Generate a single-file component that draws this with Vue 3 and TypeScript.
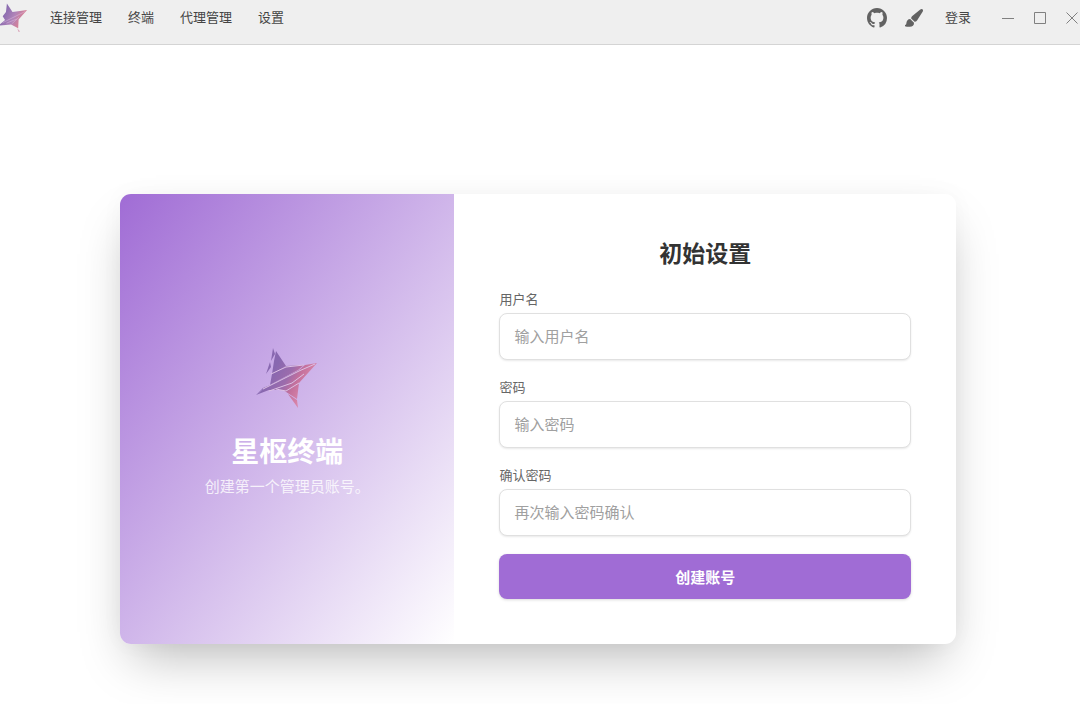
<script setup lang="ts">
import { ref } from 'vue'

interface Field {
  id: string
  label: string
  placeholder: string
  type: string
}

const navItems: string[] = ['连接管理', '终端', '代理管理', '设置']

const fields: Field[] = [
  { id: 'username', label: '用户名', placeholder: '输入用户名', type: 'text' },
  { id: 'password', label: '密码', placeholder: '输入密码', type: 'password' },
  { id: 'confirm', label: '确认密码', placeholder: '再次输入密码确认', type: 'password' },
]

const values = ref<Record<string, string>>({ username: '', password: '', confirm: '' })
</script>

<template>
  <div class="page">
    <header class="topbar">
      <svg class="brand" viewBox="0 0 64 64" aria-hidden="true">
        <defs>
          <linearGradient id="brandFill" gradientUnits="userSpaceOnUse" x1="8" y1="20" x2="58" y2="44">
            <stop offset="0.1" stop-color="#8a6cb0" />
            <stop offset="0.5" stop-color="#b184b8" />
            <stop offset="0.8" stop-color="#d58096" />
          </linearGradient>
        </defs>
        <path fill="url(#brandFill)" d="M19 1 31 19 62 15 44 35 43 54 28 46 1 48 15 36 10 28 17 19Z" />
        <path fill="#d9a3b8" d="M41 54 47 61 44 62Z" />
        <path class="brand-line" d="M10 42 58 18M18 43 40 34M30 44 45 30" />
      </svg>
      <nav class="nav">
        <a v-for="item in navItems" :key="item" href="#">{{ item }}</a>
      </nav>
      <div class="actions">
        <a class="icon-link" href="#" aria-label="GitHub">
          <svg width="20" height="20" viewBox="0 0 16 16" fill="currentColor">
            <path d="M8 0C3.58 0 0 3.58 0 8c0 3.54 2.29 6.53 5.47 7.59.4.07.55-.17.55-.38 0-.19-.01-.82-.01-1.49-2.01.37-2.53-.49-2.69-.94-.09-.23-.48-.94-.82-1.13-.28-.15-.68-.52-.01-.53.63-.01 1.08.58 1.23.82.72 1.21 1.87.87 2.33.66.07-.52.28-.87.51-1.07-1.78-.2-3.64-.89-3.64-3.95 0-.87.31-1.59.82-2.15-.08-.2-.36-1.02.08-2.12 0 0 .67-.21 2.2.82.64-.18 1.32-.27 2-.27s1.36.09 2 .27c1.53-1.04 2.2-.82 2.2-.82.44 1.1.16 1.92.08 2.12.51.56.82 1.27.82 2.15 0 3.07-1.87 3.75-3.65 3.95.29.25.54.73.54 1.48 0 1.07-.01 1.93-.01 2.2 0 .21.15.46.55.38A8.01 8.01 0 0 0 16 8c0-4.42-3.58-8-8-8z" />
          </svg>
        </a>
        <button class="icon-button brush" type="button" aria-label="主题">
          <svg width="18" height="18" viewBox="0 0 18 18" fill="currentColor">
            <path d="M17.600.4c.6.6.5 1.500 0 2.300L12.200 11.200c-.5.7-1.200 1.200-2.100 1.500L9.600 12.800 6 9.300 6.200 8.700C6.500 7.900 7 7.300 7.600 6.800L15.300.6c.8-.6 1.700-.8 2.300-.2Z" />
            <path d="M5.200 10 9 13.700c.3 2.600-1.700 4-4.100 4.100-1.800.1-3.600-.1-4.900-.6V16c1-.2 1.300-1 1.400-2.100.2-2.200 1.500-3.800 3.800-3.900Z" />
          </svg>
        </button>
        <a class="login" href="#">登录</a>
        <div class="window-controls">
          <button class="icon-button" type="button" aria-label="最小化">
            <svg width="14" height="14" viewBox="0 0 14 14"><path d="M1 7.500H13" /></svg>
          </button>
          <button class="icon-button" type="button" aria-label="最大化">
            <svg width="14" height="14" viewBox="0 0 14 14"><path d="M1.500 1.500H12.500V12.500H1.500Z" /></svg>
          </button>
          <button class="icon-button" type="button" aria-label="关闭">
            <svg width="14" height="14" viewBox="0 0 14 14"><path d="M1.500 1.500 12.500 12.500M12.500 1.500 1.500 12.500" /></svg>
          </button>
        </div>
      </div>
    </header>

    <main class="stage">
      <section class="card">
        <div class="intro">
          <svg class="emblem" viewBox="0 0 64 64" aria-hidden="true">
            <defs>
              <linearGradient id="emblemFill" gradientUnits="userSpaceOnUse" x1="14" y1="22" x2="54" y2="44">
                <stop offset="0.1" stop-color="#8868b0" />
                <stop offset="0.45" stop-color="#9c6cac" />
                <stop offset="0.65" stop-color="#c4709c" />
                <stop offset="0.9" stop-color="#d884a8" />
              </linearGradient>
            </defs>
            <g fill="url(#emblemFill)">
              <path d="M18 1 20 7 16 14ZM21 4 31 19 17 27 19 14ZM15 15 16 20 11 27Z" />
              <path d="M17 27 31 19 49 18 43 23 11 40 1 48 8 41 15 38Z" />
              <path d="M50 18 62 16 44 36 42 52 28 43 14 43 1 48 11 40 44 23Z" />
              <path d="M33 47 42 53 43 61Z" />
            </g>
            <path class="emblem-line" d="M16 27 31 20 49 18M8 42 44 24 60 17M14 44 37 36 49 27M21 42 31 44 44 36" />
          </svg>
          <h1>星枢终端</h1>
          <p>创建第一个管理员账号。</p>
        </div>

        <form class="setup" @submit.prevent>
          <h2>初始设置</h2>
          <div v-for="field in fields" :key="field.id" class="field">
            <label :for="field.id">{{ field.label }}</label>
            <input
              :id="field.id"
              v-model="values[field.id]"
              :type="field.type"
              :placeholder="field.placeholder"
              autocomplete="off"
            />
          </div>
          <button class="submit" type="submit">创建账号</button>
        </form>
      </section>
    </main>
  </div>
</template>

<style>
body {
  margin: 0;
  background: #fff;
}
</style>

<style scoped>
.page {
  height: 100vh;
  overflow: hidden;
  font-family: "Liberation Sans", "Noto Sans CJK SC", sans-serif;
  color: #333;
}

.topbar {
  display: flex;
  align-items: center;
  box-sizing: border-box;
  height: 45px;
  padding: 0 1px 8px 0;
  border-bottom: 1px solid #d4d4d4;
  background: #efefef;
  overflow: hidden;
}

.brand {
  flex: none;
  width: 30px;
  height: 30px;
  margin-left: -2px;
}

.brand-line,
.emblem-line {
  fill: none;
  stroke: #dcc0e4;
  stroke-width: 1;
}

.nav {
  display: flex;
  gap: 26px;
  margin-left: 22px;
}

.nav a,
.login {
  color: #444;
  font-size: 13px;
  line-height: 20px;
  text-decoration: none;
}

.actions {
  display: flex;
  align-items: center;
  margin-left: auto;
  color: #626262;
}

.icon-link,
.icon-button {
  display: flex;
  padding: 0;
  border: 0;
  background: none;
  color: inherit;
}

.brush {
  margin: 0 22px 0 18px;
}

.window-controls {
  display: flex;
  gap: 18px;
  margin-left: 30px;
}

.window-controls svg {
  fill: none;
  stroke: #808080;
}

.stage {
  padding: 149px 124px 60px 120px;
}

.card {
  display: grid;
  grid-template-columns: 2fr 3fr;
  border-radius: 11px;
  background: #fff;
  box-shadow: 0 24px 48px -12px rgba(0, 0, 0, 0.27), 0 0 24px rgba(0, 0, 0, 0.03);
}

.intro {
  display: flex;
  flex-direction: column;
  align-items: center;
  justify-content: center;
  padding-top: 6px;
  border-radius: 11px 0 0 11px;
  background: linear-gradient(to bottom right, #a06cd5, #fff);
  color: #fff;
  text-align: center;
}

.emblem {
  width: 64px;
  height: 64px;
  margin-bottom: 22px;
}

.intro h1 {
  margin: 0;
  font-size: 28px;
  line-height: 40px;
}

.intro p {
  margin: 3px 0 0;
  font-size: 15px;
  line-height: 22px;
  opacity: 0.8;
}

.setup {
  padding: 44px 45px 45px;
}

.setup h2 {
  margin: 0 0 20px;
  color: #333;
  font-size: 23px;
  line-height: 32px;
  text-align: center;
}

.field {
  margin-bottom: 18px;
}

.field label {
  display: block;
  margin-bottom: 3px;
  color: #666;
  font-size: 13px;
  line-height: 20px;
}

.field input {
  display: block;
  box-sizing: border-box;
  width: 100%;
  height: 47px;
  padding: 0 14px;
  border: 1px solid #e0e0e0;
  border-radius: 8px;
  background: #fff;
  box-shadow: 0 1px 2px rgba(0, 0, 0, 0.09);
  color: #333;
  font-family: inherit;
  font-size: 15px;
  outline: none;
}

.field input::placeholder {
  color: #a0a0a0;
  opacity: 1;
}

.submit {
  display: block;
  width: 100%;
  height: 45px;
  padding: 0;
  border: 0;
  border-radius: 8px;
  background: #a06cd5;
  box-shadow: 0 1px 3px rgba(0, 0, 0, 0.15);
  color: #fff;
  font-family: inherit;
  font-size: 15px;
  font-weight: 700;
}
</style>
